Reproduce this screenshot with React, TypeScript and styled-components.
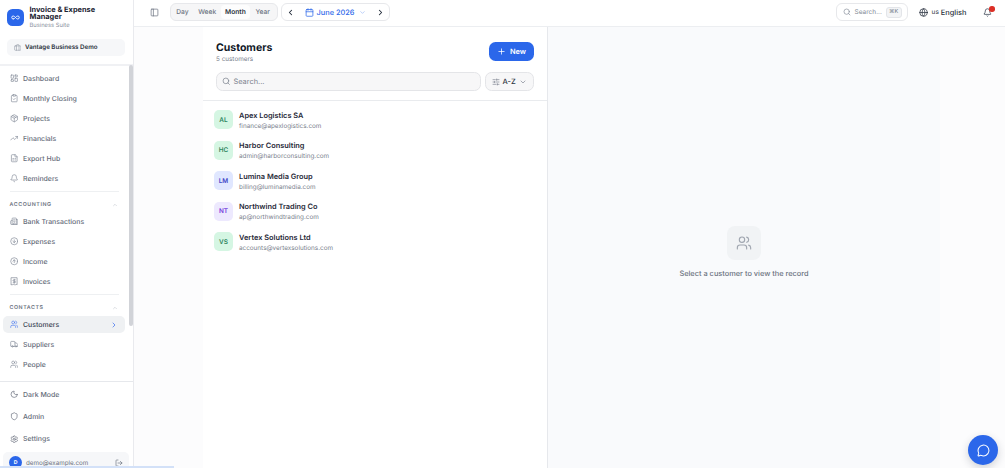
import React from "react";
import styled, { createGlobalStyle, css } from "styled-components";
import {
  Infinity as InfinityIcon, Briefcase, LayoutDashboard, ClipboardCheck, Package, TrendingUp, FileSpreadsheet,
  Bell, Building2, CircleArrowDown, CircleArrowUp, Users, Truck, Moon, Shield, Settings, LogOut,
  ChevronUp, ChevronRight, ChevronLeft, ChevronDown, PanelLeft, Calendar, Search, Globe, Plus, SlidersHorizontal, MessageCircle,
  type LucideIcon,
} from "lucide-react";

const Global = createGlobalStyle`
  *, *::before, *::after { box-sizing: border-box; }
  body { margin: 0; overflow: hidden; background: #fcfcfd; font-family: Inter, "Liberation Sans", sans-serif; color: #1f2937; text-rendering: geometricPrecision; }
  svg { display: block; flex: none; }
`;

const Shell = styled.div`
  display: flex;
  width: 100vw;
  height: 100vh;
  overflow: hidden;
`;

/* ---------- sidebar ---------- */
const Sidebar = styled.aside`
  display: flex;
  flex-direction: column;
  flex: none;
  width: 134px;
  background: #fff;
  border-right: 1px solid #e9eaee;
`;
const Brand = styled.div`
  height: 66px;
  flex: none;
  padding: 5.5px 8px 0 7px;
  border-bottom: 2px solid #f0f1f4;
`;
const BrandRow = styled.div`
  display: flex;
  align-items: center;
  gap: 5.5px;
  height: 24px;
`;
const Logo = styled.div`
  display: grid;
  place-items: center;
  width: 17px;
  height: 17px;
  border-radius: 5.5px;
  background: #2b67ea;
  color: #fff;
`;
const BrandName = styled.div`
  font-size: 7.4px;
  line-height: 7.4px;
  font-weight: 700;
  color: #1a2230;
`;
const BrandSub = styled.div`
  margin-top: 1.6px;
  font-size: 5.8px;
  line-height: 7px;
  color: #8a919e;
`;
const Company = styled.div`
  display: flex;
  align-items: center;
  gap: 4px;
  height: 17px;
  margin-top: 9.5px;
  padding-left: 6.5px;
  border-radius: 5px;
  background: #f6f7f9;
  color: #8a919e;
  font-size: 6.2px;
  font-weight: 600;
  span { color: #2b3340; }
`;
const NavArea = styled.div`
  display: flex;
  flex: 1;
  min-height: 0;
`;
const Nav = styled.nav`
  flex: 1;
  min-width: 0;
  overflow: hidden;
  padding: 4px 4px 0 3px;
`;
const Track = styled.div`
  width: 4px;
`;
const Thumb = styled.div`
  width: 4px;
  height: 261px;
  margin-top: -1px;
  border-radius: 2px;
  background: #d1d3d8;
`;
const NavItem = styled.div<{ $active?: boolean }>`
  display: flex;
  align-items: center;
  gap: 5px;
  height: 17px;
  margin-bottom: 3px;
  padding: 0 7px 0 6.5px;
  border-radius: 5px;
  font-size: 6.95px;
  font-weight: 500;
  color: #656c79;
  svg { color: #858c99; }
  span { flex: 1; white-space: nowrap; }
  ${(p) => p.$active && css`
    background: #eff1f3;
    color: #374151;
    svg { color: #4f7df0; }
  `}
`;
const Group = styled.div`
  display: flex;
  align-items: center;
  justify-content: space-between;
  height: 22px;
  margin: 4px 6px 0 6.5px;
  padding: 4px 1px 0 0;
  border-top: 1px solid #eef0f2;
  font-size: 5.3px;
  font-weight: 600;
  letter-spacing: 0.57px;
  color: #6b7280;
  svg { color: #b9bec7; }
`;
const Foot = styled.div`
  flex: none;
  height: 87px;
  overflow: hidden;
  padding: 4px 4px 0 3px;
  border-top: 1px solid #e6e8ec;
`;
const FootItem = styled(NavItem)`
  margin-bottom: 5.2px;
  svg { color: #6b7280; }
`;
const Account = styled.div`
  display: flex;
  align-items: center;
  gap: 4px;
  height: 21px;
  margin-top: -0.5px;
  padding: 0 6px;
  border-radius: 5px;
  background: #f6f7f9;
  font-size: 6.25px;
  color: #6b7280;
  span { flex: 1; }
`;
const Initial = styled.b`
  display: grid;
  place-items: center;
  width: 13px;
  height: 13px;
  border-radius: 50%;
  background: #2b67ea;
  color: #fff;
  font-size: 5.2px;
`;
const StatusStrip = styled.div`
  position: absolute;
  left: 0;
  bottom: 0;
  width: 174px;
  height: 2px;
  background: #d3e1f8;
`;

/* ---------- top bar ---------- */
const Main = styled.div`
  display: flex;
  flex: 1;
  flex-direction: column;
  min-width: 0;
`;
const TopBar = styled.header`
  display: flex;
  align-items: center;
  flex: none;
  height: 27px;
  padding: 0 13px 2px 16px;
  border-bottom: 1px solid #eceef1;
  background: #fff;
  color: #6b7280;
  font-size: 7.2px;
`;
const Segments = styled.div`
  display: flex;
  align-items: center;
  height: 18px;
  width: 108px;
  margin-left: 10.5px;
  padding: 0 1px;
  border: 1px solid #e7e8eb;
  border-radius: 6px;
  background: #f6f6f7;
`;
const Segment = styled.div<{ $on?: boolean; $w: number }>`
  display: grid;
  place-items: center;
  width: ${(p) => p.$w}px;
  height: 14px;
  border-radius: 4px;
  font-weight: 500;
  font-size: 6.7px;
  ${(p) => p.$on && css`background: #fdfdfd; color: #2b3340; font-weight: 600;`}
`;
const Period = styled.div`
  display: flex;
  align-items: center;
  justify-content: space-between;
  width: 109px;
  height: 18px;
  margin-left: 3px;
  padding: 0 4px;
  border: 1px solid #e7e8eb;
  border-radius: 6px;
  background: #fff;
  color: #1f2937;
`;
const PeriodLabel = styled.div`
  display: flex;
  align-items: center;
  gap: 3px;
  color: #2f69ea;
  font-size: 7.4px;
  font-weight: 500;
  svg:last-child { color: #8fb0f5; margin-left: 1px; }
`;
const QuickSearch = styled.div`
  display: flex;
  align-items: center;
  width: 72px;
  height: 18px;
  margin-left: auto;
  padding: 0 5.5px 0 6px;
  border: 1px solid #e7e8eb;
  border-radius: 6px;
  font-size: 6.5px;
  color: #858c98;
  span { flex: 1; margin-left: 3.5px; }
`;
const Key = styled.div`
  display: grid;
  place-items: center;
  width: 16px;
  height: 11px;
  border: 1px solid #e3e5e9;
  border-radius: 3px;
  background: #f3f4f6;
  font-size: 5.5px;
  color: #6b7280;
`;
const Language = styled.div`
  display: flex;
  align-items: center;
  margin-left: 10.5px;
  color: #2b3340;
  font-size: 7.4px;
  font-weight: 500;
  small { margin: 0 2px 0 4px; font-size: 6.5px; font-weight: 400; }
`;
const Alerts = styled.div`
  position: relative;
  margin-left: 16.5px;
  color: #374151;
`;
const Dot = styled.i`
  position: absolute;
  top: -1.5px;
  right: -2.5px;
  width: 5.5px;
  height: 5.5px;
  border-radius: 50%;
  background: #dc2f26;
`;

/* ---------- content ---------- */
const Content = styled.main`
  display: flex;
  flex: 1;
  min-height: 0;
  padding: 0 65px 0 69px;
  background: #fcfcfd;
`;
const ListPane = styled.section`
  flex: none;
  width: 345px;
  border-right: 1px solid #e6e8ec;
  background: #fff;
`;
const ListHead = styled.div`
  height: 73.5px;
  padding: 14px 13px 0;
  border-bottom: 1px solid #e9ebee;
`;
const Row = styled.div`
  display: flex;
  justify-content: space-between;
`;
const Title = styled.h1`
  margin: 0;
  font-size: 10.5px;
  line-height: 13px;
  font-weight: 700;
  color: #111827;
`;
const Count = styled.div`
  margin-top: 1px;
  font-size: 6.35px;
  line-height: 9px;
  color: #7b828e;
`;
const NewButton = styled.button`
  display: flex;
  align-items: center;
  justify-content: center;
  gap: 4px;
  width: 45px;
  height: 19px;
  margin-top: 1px;
  padding: 0;
  border: 0;
  border-radius: 6.5px;
  background: #2b67ea;
  color: #fff;
  font: 600 7.4px Inter, sans-serif;
  text-rendering: inherit;
`;
const Field = styled.div`
  display: flex;
  align-items: center;
  gap: 3px;
  width: 265px;
  height: 19px;
  padding-left: 5px;
  border: 1px solid #e4e5e8;
  border-radius: 6.5px;
  background: #f7f7f8;
  color: #7b828e;
  font-size: 7.4px;
`;
const Sort = styled(Field)`
  width: 49px;
  padding-left: 6px;
  gap: 2.5px;
  font-weight: 500;
  span { color: #2b3340; }
  svg:last-child { margin-left: 1px; }
`;
const Filters = styled(Row)`
  margin-top: 8px;
`;
const Customer = styled.div`
  display: flex;
  align-items: center;
  gap: 6px;
  height: 30.5px;
  padding-left: 11px;
`;
const Customers = styled.div`
  padding-top: 4px;
`;
const Avatar = styled.div<{ $bg: string; $fg: string }>`
  display: grid;
  place-items: center;
  width: 19px;
  height: 19px;
  border-radius: 5px;
  background: ${(p) => p.$bg};
  color: ${(p) => p.$fg};
  font-size: 6.4px;
  font-weight: 600;
`;
const Name = styled.div`
  padding-top: 2px;
  font-size: 7.4px;
  line-height: 10px;
  font-weight: 600;
  color: #1f2937;
`;
const Mail = styled.div`
  margin-top: 1px;
  font-size: 6.35px;
  line-height: 9px;
  color: #7b828e;
`;
const Detail = styled.section`
  display: flex;
  flex: 1;
  flex-direction: column;
  align-items: center;
  padding-top: 199px;
  background: #f9fafc;
  font-size: 7.4px;
  font-weight: 500;
  color: #6b7280;
`;
const EmptyIcon = styled.div`
  display: grid;
  place-items: center;
  width: 34px;
  height: 34px;
  margin-bottom: 9px;
  border-radius: 8px;
  background: #f1f3f5;
  color: #a0a6b0;
`;
const Chat = styled.button`
  position: absolute;
  right: 7px;
  bottom: 3px;
  display: grid;
  place-items: center;
  width: 30px;
  height: 30px;
  padding: 0;
  border: 0;
  border-radius: 50%;
  background: #2b67ea;
  color: #fff;
  box-shadow: 0 3px 8px rgba(30, 41, 59, 0.2);
`;

type Entry = [string, LucideIcon];
const general: Entry[] = [
  ["Dashboard", LayoutDashboard], ["Monthly Closing", ClipboardCheck], ["Projects", Package],
  ["Financials", TrendingUp], ["Export Hub", FileSpreadsheet], ["Reminders", Bell],
];
const InvoiceIcon = ((props: { size?: number }) => (
  <svg width={props.size} height={props.size} viewBox="0 0 24 24" fill="none" stroke="currentColor" strokeWidth="2" strokeLinecap="round" strokeLinejoin="round">
    <path d="M4 2h16v20l-2-1-2 1-2-1-2 1-2-1-2 1-2-1-2 1Z" />
    <path d="M15 8h-4.500a2 2 0 0 0 0 4h3a2 2 0 0 1 0 4H9" />
    <path d="M12 17.500v-11" />
  </svg>
)) as unknown as LucideIcon;
const accounting: Entry[] = [
  ["Bank Transactions", Building2], ["Expenses", CircleArrowDown], ["Income", CircleArrowUp], ["Invoices", InvoiceIcon],
];
const contacts: Entry[] = [["Customers", Users], ["Suppliers", Truck], ["People", Users]];
const footer: Entry[] = [["Dark Mode", Moon], ["Admin", Shield], ["Settings", Settings]];
const customers = [
  ["AL", "Apex Logistics SA", "finance@apexlogistics.com", "#d5f6e3", "#2f855f"],
  ["HC", "Harbor Consulting", "admin@harborconsulting.com", "#d5f6e3", "#2f855f"],
  ["LM", "Lumina Media Group", "billing@luminamedia.com", "#e0e7ff", "#4348c8"],
  ["NT", "Northwind Trading Co", "ap@northwindtrading.com", "#ede9fe", "#7742dc"],
  ["VS", "Vertex Solutions Ltd", "accounts@vertexsolutions.com", "#d5f6e3", "#2f855f"],
];

const Items = ({ list }: { list: Entry[] }) => (
  <>
    {list.map(([label, Icon]) => (
      <NavItem key={label} $active={label === "Customers"}>
        <Icon size={8.5} strokeWidth={1.9} />
        <span>{label}</span>
        {label === "Customers" && <ChevronRight size={8} strokeWidth={2.4} />}
      </NavItem>
    ))}
  </>
);

export default function App() {
  return (
    <Shell>
      <Global />
      <Sidebar>
        <Brand>
          <BrandRow>
            <Logo><InfinityIcon size={9} strokeWidth={2.4} /></Logo>
            <div>
              <BrandName>Invoice &amp; Expense<br />Manager</BrandName>
              <BrandSub>Business Suite</BrandSub>
            </div>
          </BrandRow>
          <Company><Briefcase size={7.5} strokeWidth={1.7} /><span>Vantage Business Demo</span></Company>
        </Brand>
        <NavArea>
          <Nav>
            <Items list={general} />
            <Group>ACCOUNTING<ChevronUp size={6} /></Group>
            <Items list={accounting} />
            <Group>CONTACTS<ChevronUp size={6} /></Group>
            <Items list={contacts} />
          </Nav>
          <Track><Thumb /></Track>
        </NavArea>
        <Foot>
          {footer.map(([label, Icon]) => (
            <FootItem key={label}><Icon size={8.5} strokeWidth={2} /><span>{label}</span></FootItem>
          ))}
          <Account><Initial>D</Initial><span>demo@example.com</span><LogOut size={8} /></Account>
        </Foot>
      </Sidebar>
      <Main>
        <TopBar>
          <PanelLeft size={9} strokeWidth={1.9} />
          <Segments>
            <Segment $w={22}>Day</Segment>
            <Segment $w={28}>Week</Segment>
            <Segment $w={29} $on>Month</Segment>
            <Segment $w={26}>Year</Segment>
          </Segments>
          <Period>
            <ChevronLeft size={9} strokeWidth={2.7} />
            <PeriodLabel><Calendar size={9} /><span>June 2026</span><ChevronDown size={7} /></PeriodLabel>
            <ChevronRight size={9} strokeWidth={2.7} />
          </Period>
          <QuickSearch><Search size={8} /><span>Search...</span><Key>⌘K</Key></QuickSearch>
          <Language><Globe size={9} /><small>us</small>English</Language>
          <Alerts><Bell size={9} /><Dot /></Alerts>
        </TopBar>
        <Content>
          <ListPane>
            <ListHead>
              <Row>
                <div><Title>Customers</Title><Count>5 customers</Count></div>
                <NewButton><Plus size={9} />New</NewButton>
              </Row>
              <Filters>
                <Field><Search size={8.5} />Search...</Field>
                <Sort><SlidersHorizontal size={8} /><span>A-Z</span><ChevronDown size={8} /></Sort>
              </Filters>
            </ListHead>
            <Customers>
              {customers.map(([code, name, mail, bg, fg]) => (
                <Customer key={code}>
                  <Avatar $bg={bg} $fg={fg}>{code}</Avatar>
                  <div><Name>{name}</Name><Mail>{mail}</Mail></div>
                </Customer>
              ))}
            </Customers>
          </ListPane>
          <Detail>
            <EmptyIcon><Users size={16} strokeWidth={1.7} /></EmptyIcon>
            Select a customer to view the record
          </Detail>
        </Content>
      </Main>
      <StatusStrip />
      <Chat aria-label="Chat"><MessageCircle size={13} strokeWidth={1.9} /></Chat>
    </Shell>
  );
}
